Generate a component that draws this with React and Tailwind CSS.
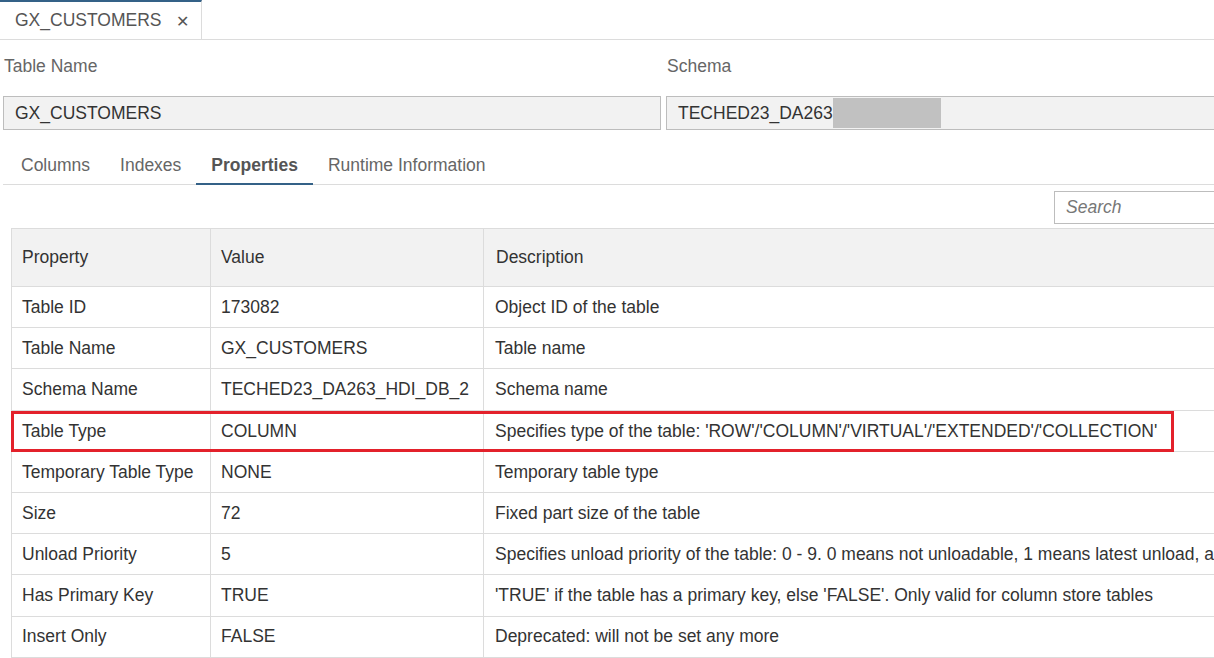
import React from 'react';

const rows = [
    ['Table ID', '173082', 'Object ID of the table'],
    ['Table Name', 'GX_CUSTOMERS', 'Table name'],
    ['Schema Name', 'TECHED23_DA263_HDI_DB_2', 'Schema name'],
    ['Table Type', 'COLUMN', "Specifies type of the table: 'ROW'/'COLUMN'/'VIRTUAL'/'EXTENDED'/'COLLECTION'"],
    ['Temporary Table Type', 'NONE', 'Temporary table type'],
    ['Size', '72', 'Fixed part size of the table'],
    ['Unload Priority', '5', 'Specifies unload priority of the table: 0 - 9. 0 means not unloadable, 1 means latest unload, and 9 means earliest unload'],
    ['Has Primary Key', 'TRUE', "'TRUE' if the table has a primary key, else 'FALSE'. Only valid for column store tables"],
    ['Insert Only', 'FALSE', 'Deprecated: will not be set any more'],
];

const tabs = ['Columns', 'Indexes', 'Properties', 'Runtime Information'];

export default function App() {
    return (
        <div className="w-[1214px] h-[658px] overflow-hidden bg-white text-[17.5px] text-[#333] font-['Liberation_Sans',Arial,sans-serif]">
            {/* editor tab strip */}
            <div className="flex h-[40px] border-b border-[#dcdcdc]">
                <div className="flex items-center w-[202px] border-t-2 border-t-[#346187] border-r border-r-[#dcdcdc] pl-[15px] text-[#555]">
                    <span>GX_CUSTOMERS</span>
                    <span className="ml-[14px] text-[16px] mt-[3px]">✕</span>
                </div>
            </div>

            {/* header fields */}
            <div className="flex pt-[13px]">
                <div className="w-[663px] pl-[3px]">
                    <div className="h-[26px] pl-[1px] text-[#666]">Table Name</div>
                    <div className="mt-[17px] h-[34px] w-[658px] border border-[#bdbdbd] bg-[#f2f2f2] flex items-center pl-[11px]">GX_CUSTOMERS</div>
                </div>
                <div className="flex-1 pl-[3px]">
                    <div className="h-[26px] pl-[1px] text-[#666]">Schema</div>
                    <div className="mt-[17px] h-[34px] border border-r-0 border-[#bdbdbd] bg-[#f2f2f2] flex items-center pl-[11px]">
                        <span>TECHED23_DA263</span>
                        <span className="h-[30px] w-[108px] bg-[#c1c1c1] -mt-[1px]"></span>
                    </div>
                </div>
            </div>

            {/* sub tabs */}
            <div className="ml-[3px] mt-[16px] flex h-[39px] border-b border-[#dcdcdc] pl-[2px]">
                {tabs.map((t) => (
                    <div
                        key={t}
                        className={
                            t === 'Properties'
                                ? 'px-[15px] pt-[2px] flex items-center font-bold text-[#555] border-b-2 border-[#346187] -mb-px'
                                : 'px-[15px] pt-[2px] flex items-center text-[#666] border-b-2 border-transparent -mb-px'
                        }
                        style={t === 'Columns' ? { paddingLeft: 16 } : undefined}
                    >
                        {t}
                    </div>
                ))}
            </div>

            {/* search */}
            <div className="flex justify-end mt-[6px]">
                <div className="w-[160px] h-[33px] border border-r-0 border-[#bdbdbd] flex items-center pl-[11px] italic text-[#777]">Search</div>
            </div>

            {/* property table */}
            <div className="relative ml-[11px] mt-[4px] w-[1500px]">
                <div className="grid grid-cols-[199px_273px_1028px] h-[59px] bg-[#f2f2f2] border border-[#dcdcdc]">
                    <div className="flex items-center pl-[10px] border-r border-[#dcdcdc]">Property</div>
                    <div className="flex items-center pl-[10px] border-r border-[#dcdcdc]">Value</div>
                    <div className="flex items-center pl-[12px]">Description</div>
                </div>
                {rows.map((r) => (
                    <div
                        key={r[0]}
                        className="grid grid-cols-[199px_273px_1028px] h-[41.2px] border-x border-b border-[#dcdcdc] whitespace-nowrap"
                    >
                        <div className="flex items-center pl-[10px] border-r border-[#dcdcdc]">{r[0]}</div>
                        <div className="flex items-center pl-[10px] border-r border-[#dcdcdc]">{r[1]}</div>
                        <div className="flex items-center pl-[11px]">{r[2]}</div>
                    </div>
                ))}
                {/* highlight annotation */}
                <div className="absolute left-0 top-[183px] w-[1163px] h-[41px] border-[3px] border-[#e3212b] pointer-events-none"></div>
            </div>
        </div>
    );
}
